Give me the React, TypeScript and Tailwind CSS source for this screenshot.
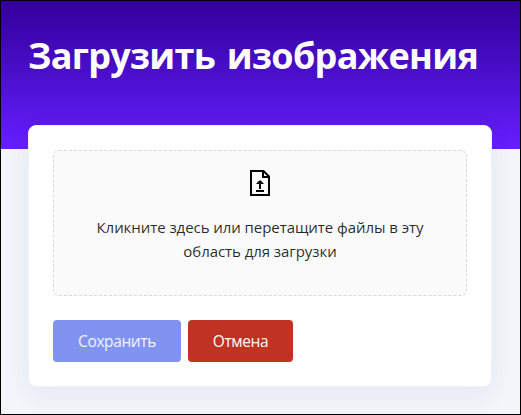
function FileUploadIcon() {
  return (
    <svg width="20" height="26" viewBox="0 0 20 26" fill="none" aria-hidden="true">
      <path d="M1 1H13.5L19 6.5V25H1Z" stroke="#000" strokeWidth="2" />
      <path d="M13 1V7H19" stroke="#000" strokeWidth="2" />
      <path d="M10 19V12" stroke="#000" strokeWidth="2" />
      <path d="M6 14L9.2 10.5H10.8L14 14Z" fill="#000" />
      <path d="M6 21H14" stroke="#000" strokeWidth="2" />
    </svg>
  );
}

export default function App() {
  return (
    <div className="h-[415px] w-[521px] overflow-hidden border border-black bg-[#f4f5fa] font-['Open_Sans','Noto_Sans',sans-serif]">
      <header className="h-[148px] bg-linear-to-b from-[#33009b] to-[#651fff] px-[27px] pt-[30px]">
        <h1 className="text-[36px] leading-[50px] font-bold tracking-[-0.7px] [word-spacing:3px] whitespace-nowrap text-white">
          Загрузить изображения
        </h1>
      </header>
      <main className="relative mx-[27px] -mt-6 h-[262px] w-[464px] rounded-lg border border-[#f1f1f5] bg-white p-6 shadow-[0_8px_24px_rgba(60,60,130,0.07)]">
        <div className="flex h-[146px] w-[414px] flex-col items-center rounded-md border border-dashed border-[#d9d9d9] bg-[#fafafa] pt-[19px]">
          <FileUploadIcon />
          <p className="mt-[19px] w-[350px] text-center text-[15px] leading-6 font-normal tracking-[-0.06px] text-black/85">
            Кликните здесь или перетащите файлы в эту
            <br />
            область для загрузки
          </p>
        </div>
        <div className="mt-6 flex gap-[7px] text-[15.5px] tracking-[-0.4px] text-white">
          <button className="h-[42px] w-32 rounded bg-[#8093f1] pt-0.5 text-white/90">Сохранить</button>
          <button className="h-[42px] w-[105px] rounded bg-[#c03221] pt-0.5">Отмена</button>
        </div>
      </main>
    </div>
  );
}
